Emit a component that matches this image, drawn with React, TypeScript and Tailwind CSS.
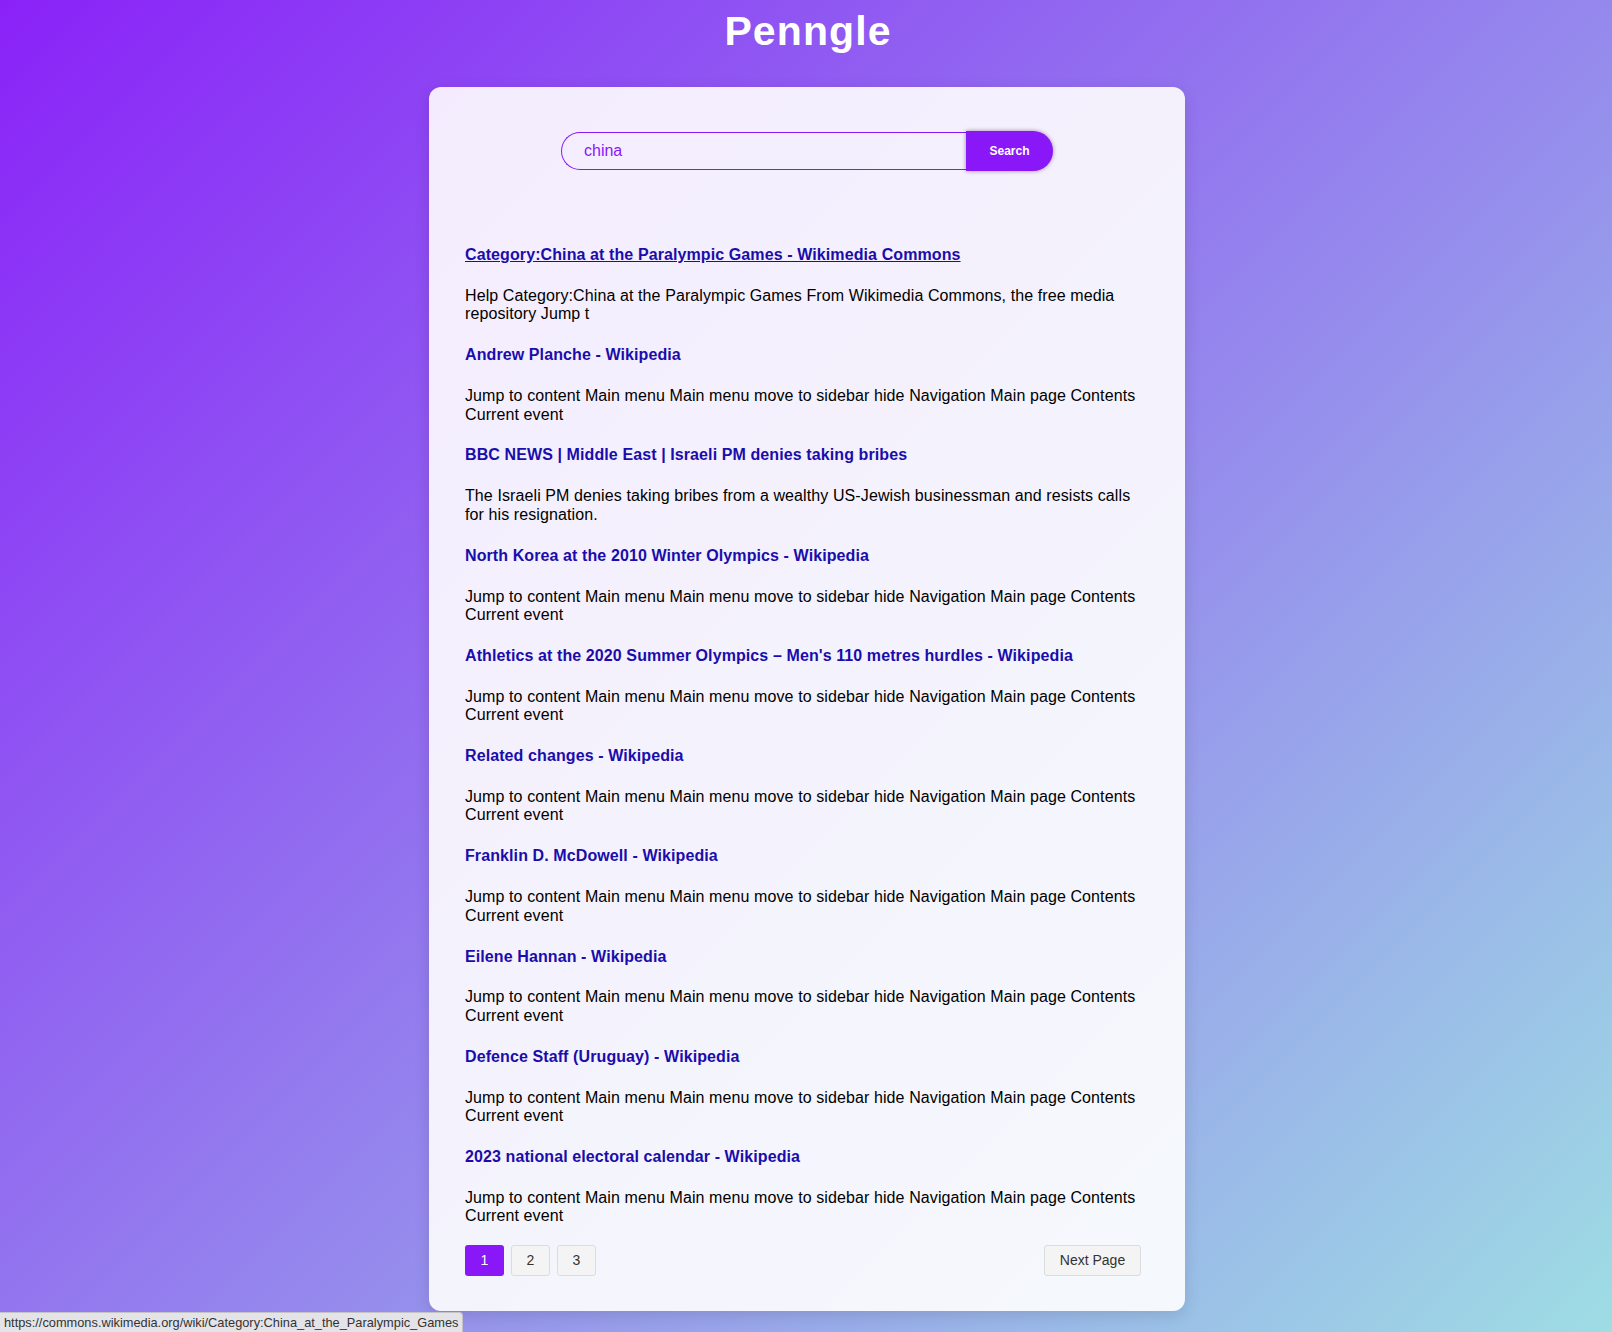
import React from "react"

const JUMP = "Jump to content Main menu Main menu move to sidebar hide Navigation Main page Contents Current event"

const RESULTS = [
  {
    title: "Category:China at the Paralympic Games - Wikimedia Commons",
    desc: "Help Category:China at the Paralympic Games From Wikimedia Commons, the free media repository Jump t",
    hover: true,
  },
  { title: "Andrew Planche - Wikipedia", desc: JUMP },
  {
    title: "BBC NEWS | Middle East | Israeli PM denies taking bribes",
    desc: "The Israeli PM denies taking bribes from a wealthy US-Jewish businessman and resists calls for his resignation.",
  },
  { title: "North Korea at the 2010 Winter Olympics - Wikipedia", desc: JUMP },
  { title: "Athletics at the 2020 Summer Olympics – Men's 110 metres hurdles - Wikipedia", desc: JUMP },
  { title: "Related changes - Wikipedia", desc: JUMP },
  { title: "Franklin D. McDowell - Wikipedia", desc: JUMP },
  { title: "Eilene Hannan - Wikipedia", desc: JUMP },
  { title: "Defence Staff (Uruguay) - Wikipedia", desc: JUMP },
  { title: "2023 national electoral calendar - Wikipedia", desc: JUMP },
]

function SearchBar() {
  return (
    <div className="ml-[96px] flex w-[492px] items-center">
      <div className="flex h-[38px] flex-1 items-center rounded-l-full border border-r-0 border-[#8a17f7] pl-[22px] text-[16px] text-[#8a17f7]">
        china
      </div>
      <button className="h-[40px] w-[87px] rounded-r-[20px] bg-[#8a17f7] text-[12px] font-bold text-white shadow-[0_0_4px_rgba(60,0,60,0.45)]">
        Search
      </button>
    </div>
  )
}

function Pagination() {
  return (
    <div className="mt-[19px] flex items-center justify-between">
      <div className="flex gap-[7px]">
        <span className="flex h-[31px] w-[39px] items-center justify-center rounded-[3px] bg-[#8a17f7] text-[14px] text-white">1</span>
        {["2", "3"].map((n) => (
          <span key={n} className="flex h-[31px] w-[39px] items-center justify-center rounded-[3px] border border-[#dcdcdc] bg-[#f4f4f4] text-[14px] text-[#333]">
            {n}
          </span>
        ))}
      </div>
      <span className="flex h-[31px] w-[97px] items-center justify-center rounded-[3px] border border-[#dcdcdc] bg-[#f4f4f4] text-[14px] text-[#333]">
        Next Page
      </span>
    </div>
  )
}

export default function App() {
  return (
    <div className="relative min-h-[1332px] bg-[linear-gradient(135deg,#8a22f8,#9edde4)] font-['Liberation_Sans',Arial,sans-serif]">
      <h1 className="pl-[4px] pt-[8px] text-center text-[41px] font-bold leading-[47px] tracking-[1.1px] text-white">Penngle</h1>
      <div className="mx-auto mt-[32px] w-[756px] translate-x-[1px] rounded-xl bg-white/90 pb-[35px] pl-[36px] pr-[44px] pt-[44px] shadow-[0_4px_16px_rgba(0,0,0,0.12)]">
        <SearchBar />
        <div className="mt-[75px] flex flex-col gap-[22.5px] tracking-[0.1px]">
          {RESULTS.map((r) => (
            <div key={r.title}>
              <a className={`block text-[16px] font-bold leading-[18.4px] text-[#1a0dab] ${r.hover ? "underline" : ""}`}>
                {r.title}
              </a>
              <p className="mt-[22.5px] text-[16px] leading-[18.4px] text-black">{r.desc}</p>
            </div>
          ))}
        </div>
        <Pagination />
      </div>
      <div className="fixed bottom-0 left-0 flex h-[20px] items-center rounded-tr-[4px] border-r border-t border-[#c4c4c8] bg-[#e4e4e8] px-[4px] text-[12.8px] text-[#333]">
        https://commons.wikimedia.org/wiki/Category:China_at_the_Paralympic_Games
      </div>
    </div>
  )
}
